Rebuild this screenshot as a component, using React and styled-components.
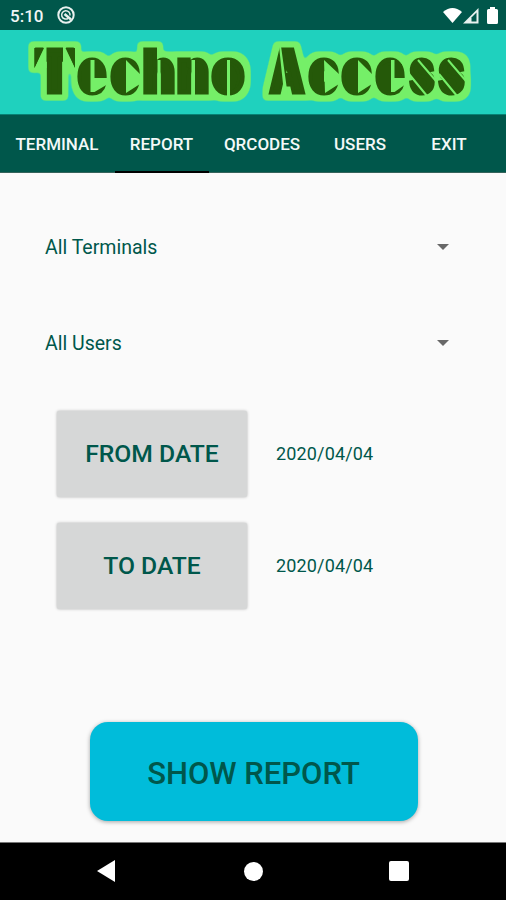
import { useState } from "react";
import styled, { createGlobalStyle } from "styled-components";

const GlobalStyle = createGlobalStyle`
  * {
    box-sizing: border-box;
  }
  body {
    margin: 0;
    background: #fafafa;
    font-family: Roboto, sans-serif;
  }
`;

const Screen = styled.div`
  display: flex;
  flex-direction: column;
  width: 506px;
  height: 900px;
  overflow: hidden;
  background: #fafafa;
  color: #00574b;
`;

const StatusBar = styled.div`
  display: flex;
  align-items: center;
  height: 30px;
  padding: 2px 7px 0 10px;
  background: #00574b;
  color: #f0f6f5;
`;

const Clock = styled.span`
  font-size: 17px;
  font-weight: 500;
  line-height: 28px;
  width: 46px;
`;

const StatusIcons = styled.div`
  display: flex;
  margin-left: auto;
`;

const Banner = styled.div`
  height: 84px;
  background: #1fd1be;
`;

const LogoText = styled.text`
  font-family: Inter, Roboto, sans-serif;
  font-weight: 900;
  font-size: 58px;
`;

const TabBar = styled.div`
  display: grid;
  grid-template-columns: 115px 94px 107px 89px 89px;
  height: 59px;
  background: #00574b;
  border-top: 1px solid #078274;
  border-bottom: 1px solid #35635b;
`;

const Tab = styled.button`
  height: 58px;
  padding: 1px 1px 0 0;
  border: none;
  border-bottom: 2px solid ${(props) => (props.$active ? "#000" : "transparent")};
  background: none;
  color: #f4f9f8;
  font-family: inherit;
  font-size: 17px;
  font-weight: 500;
  white-space: nowrap;
`;

const Content = styled.div`
  display: flex;
  flex-direction: column;
  flex: 1;
  padding: 26px 45px 0;
`;

const Spinner = styled.div`
  display: flex;
  align-items: center;
  justify-content: space-between;
  height: 96px;
  padding-right: 12px;
  font-size: 19.5px;
`;

const Arrow = styled.div`
  border: 6px solid transparent;
  border-top-color: #686868;
  border-bottom-width: 0;
`;

const DateRows = styled.div`
  display: flex;
  flex-direction: column;
  gap: 26px;
  padding: 20px 0 0 12px;
`;

const DateRow = styled.div`
  display: flex;
  align-items: center;
  gap: 29px;
  height: 86px;
`;

const DateButton = styled.button`
  width: 190px;
  height: 86px;
  padding: 0 0 2px;
  border: none;
  border-radius: 2px;
  background: #d6d7d7;
  box-shadow: 0 0 3px rgba(0, 0, 0, 0.3);
  color: #00574b;
  font-family: inherit;
  font-size: 24.7px;
  font-weight: 500;
`;

const DateValue = styled.span`
  padding-bottom: 1px;
  font-size: 18px;
  letter-spacing: 0.15px;
`;

const ReportButton = styled.button`
  align-self: center;
  width: 328px;
  height: 99px;
  margin: 113px 0 0 1px;
  padding: 4px 0 0;
  border: none;
  border-radius: 18px;
  background: #00bcda;
  box-shadow: 0 1px 4px rgba(0, 0, 0, 0.35);
  color: #00574b;
  font-family: inherit;
  font-size: 31px;
  font-weight: 500;
`;

const NavBar = styled.div`
  display: grid;
  grid-template-columns: 180px 146px 145px;
  align-items: center;
  justify-items: center;
  height: 58px;
  padding-bottom: 1px;
  border-top: 1px solid #777;
  background: #000;
`;

const BackIcon = styled.div`
  margin-left: 31px;
  border: solid transparent;
  border-width: 11px 18px 11px 0;
  border-right-color: #fff;
`;

const HomeIcon = styled.div`
  width: 19px;
  height: 19px;
  border-radius: 50%;
  background: #fff;
`;

const RecentIcon = styled.div`
  width: 20px;
  height: 20px;
  border-radius: 2px;
  background: #fff;
`;

// each letter: [glyph, left edge, width]
const words = [
  [["T", 36, 37], ["e", 78, 28], ["c", 111, 28], ["h", 143, 32], ["n", 177, 32], ["o", 212, 32]],
  [["A", 270, 34], ["c", 309, 29], ["c", 342, 29], ["e", 376, 28], ["s", 410, 24], ["s", 439, 25]],
];

// cuts that give the lettering its stencil look
const cuts = [
  "M44 16h2.500v22H34.500zM63 16h2.500L75 38H63z",
  "M279 16h2l7 51h-8l3-13z",
  "M157.500 30h3v36h-3zM191.500 30h3.500v36h-3.500zM227 30h3v36h-3z",
  "M90.500 30h4v18H108v6L94.500 62h-4z",
  "M391 30h3.500v18H406v6l-11.500 8H391z",
  "M126 30L140 44v10l-14 9z",
  "M324 30l15 14v10l-14 9z",
  "M358 30l14 14v10l-14 9z",
];

const slits = "M418 30L436 51M409 44L427 66M448 30L466 51M439 44L457 66";

function Logo() {
  return (
    <svg width="506" height="84" viewBox="0 0 506 84">
      <filter id="outline" filterUnits="userSpaceOnUse" x="0" y="0" width="506" height="84" colorInterpolationFilters="sRGB">
        <feMorphology in="SourceAlpha" operator="dilate" radius="5" />
        <feGaussianBlur stdDeviation="2" />
        <feComponentTransfer result="halo">
          <feFuncA type="linear" slope="5" intercept="-1" />
        </feComponentTransfer>
        <feFlood floodColor="#75ef68" />
        <feComposite in2="halo" operator="in" />
        <feMerge>
          <feMergeNode />
          <feMergeNode in="SourceGraphic" />
        </feMerge>
      </filter>
      <g fill="#255909" filter="url(#outline)">
        <g stroke="#255909" strokeWidth="5">
          {words.map((letters, i) => (
            <LogoText key={i} y="61.500">
              {letters.map(([glyph, x, width]) => (
                <tspan key={x} x={x} textLength={width} lengthAdjust="spacingAndGlyphs">
                  {glyph}
                </tspan>
              ))}
            </LogoText>
          ))}
        </g>
        <path d="M34.500 18H45L34.500 38zM75 18H64.500L75 38z" />
        {/* fills the counters left and right of the slits */}
        <ellipse cx="228.500" cy="48" rx="9" ry="13" />
        <path d="M82 36h10v24H82zM115 36h11v24H115zM313 36h11v24H313zM346 36h12v24H346zM380 36h12v24H380z" />
        <path d="M94 34h9v14H94zM394 34h8v14H394z" />
      </g>
      <path d={cuts.join("")} fill="#75ef68" />
      <path d="M34.500 18H44L34.500 38zM75 18H65.500L75 38z" fill="#255909" />
      <path d={slits} stroke="#75ef68" strokeWidth="2" fill="none" />
    </svg>
  );
}

const tabs = ["TERMINAL", "REPORT", "QRCODES", "USERS", "EXIT"];

export default function App() {
  const [active, setActive] = useState("REPORT");

  return (
    <Screen>
      <GlobalStyle />
      <StatusBar>
        <Clock>5:10</Clock>
        <svg width="20" height="20" viewBox="0 0 20 20" fill="none" stroke="#e8f1ef">
          <circle cx="10" cy="9" r="7.700" strokeWidth="2" />
          <path d="M12 12.500A4.200 4.200 0 1 1 14 9.500" strokeWidth="1.500" />
          <path d="M8.500 8l6.500 5.500" strokeWidth="2.500" />
        </svg>
        <StatusIcons>
          <svg width="56" height="20" viewBox="443 5 56 20">
            <path d="M443 11Q452.500 3 462 11L452.500 22Z" fill="#fff" />
            <path d="M463 22.500L478.500 7V22.500Z" fill="#e8f1ef" />
            <path d="M471.500 20.500v-4l5-5v9z" fill="#00574b" />
            <path d="M487 9.500q0-1.500 1.500-1.500H490V6h5v2h1.500q1.500 0 1.500 1.500v12q0 1.500-1.500 1.500h-8q-1.500 0-1.500-1.500z" fill="#fff" />
          </svg>
        </StatusIcons>
      </StatusBar>
      <Banner>
        <Logo />
      </Banner>
      <TabBar>
        {tabs.map((tab) => (
          <Tab key={tab} $active={tab === active} onClick={() => setActive(tab)}>
            {tab}
          </Tab>
        ))}
      </TabBar>
      <Content>
        <Spinner>
          All Terminals
          <Arrow />
        </Spinner>
        <Spinner>
          All Users
          <Arrow />
        </Spinner>
        <DateRows>
          <DateRow>
            <DateButton>FROM DATE</DateButton>
            <DateValue>2020/04/04</DateValue>
          </DateRow>
          <DateRow>
            <DateButton>TO DATE</DateButton>
            <DateValue>2020/04/04</DateValue>
          </DateRow>
        </DateRows>
        <ReportButton>SHOW REPORT</ReportButton>
      </Content>
      <NavBar>
        <BackIcon />
        <HomeIcon />
        <RecentIcon />
      </NavBar>
    </Screen>
  );
}
